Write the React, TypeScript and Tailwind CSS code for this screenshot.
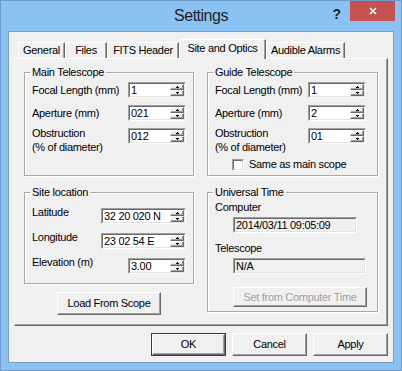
import type { ReactNode } from "react";

// classic 3D edges
const sunken =
  "border border-t-[#a0a0a0] border-l-[#a0a0a0] border-b-white border-r-white";
const sunkenInner =
  "border border-t-[#696969] border-l-[#696969] border-b-[#e3e3e3] border-r-[#e3e3e3]";
const raised =
  "border border-t-white border-l-white border-b-[#696969] border-r-[#696969] shadow-[inset_-1px_-1px_0_#a0a0a0]";

function Arrow({ up }: { up?: boolean }) {
  return (
    <svg width="3" height="2" viewBox="0 0 3 2" shapeRendering="crispEdges">
      {up ? <path d="M1 0h1v1h1v1H0V1h1z" fill="#000" /> : <path d="M0 0h3v1H2v1H1V1H0z" fill="#000" />}
    </svg>
  );
}

function Spin({ value, width }: { value: string; width: string }) {
  return (
    <div className={`${sunken} ${width} h-[16px] bg-white`}>
      <div className={`${sunkenInner} flex h-full`}>
        <div className="flex-1 pl-[1px] leading-[12px] text-black overflow-hidden whitespace-nowrap">{value}</div>
        <div className="flex w-[14px] flex-col">
          <div className={`${raised} flex h-[6px] items-center justify-center bg-[#f0f0f0]`}>
            <Arrow up />
          </div>
          <div className={`${raised} flex h-[6px] items-center justify-center bg-[#f0f0f0]`}>
            <Arrow />
          </div>
        </div>
      </div>
    </div>
  );
}

function Field({ value, width }: { value: string; width: string }) {
  return (
    <div className={`${sunken} ${width} h-[16px] bg-[#f0f0f0]`}>
      <div className={`${sunkenInner} h-full pl-[1px] leading-[12px] text-black`}>{value}</div>
    </div>
  );
}

function Group({ title, children, className = "" }: { title: string; children: ReactNode; className?: string }) {
  return (
    <fieldset
      className={`border border-[#a9a9a9] px-[7px] shadow-[1px_1px_0_white,inset_1px_1px_0_white] ${className}`}
    >
      <legend className="-ml-[2px] bg-[#f0f0f0] px-[2px] leading-[13px]">{title}</legend>
      {children}
    </fieldset>
  );
}

function Tab({ label, width, active }: { label: string; width: string; active?: boolean }) {
  if (active) {
    return (
      <div
        className={`${width} relative z-10 h-[20px] border-l border-r border-t border-l-white border-t-white border-r-[#696969] bg-[#f0f0f0] pt-[1px] text-center leading-[14px] shadow-[inset_-1px_0_0_#a0a0a0]`}
      >
        {label}
      </div>
    );
  }
  return (
    <div
      className={`${width} mb-px h-[16px] border-l border-r border-t border-l-white border-t-white border-r-[#696969] text-center leading-[14px] shadow-[inset_-1px_0_0_#a0a0a0]`}
    >
      {label}
    </div>
  );
}

function Button({ label, width, height, primary, disabled, className = "" }: {
  label: string;
  width: string;
  height: string;
  primary?: boolean;
  disabled?: boolean;
  className?: string;
}) {
  return (
    <div className={`${width} ${height} ${primary ? "border border-[#3c3c3c]" : ""} ${className}`}>
      <div
        className={`${raised} flex h-full items-center justify-center bg-[#f0f0f0] ${disabled ? "text-[#a0a0a0]" : "text-black"}`}
      >
        {label}
      </div>
    </div>
  );
}

export default function App() {
  return (
    <div className="flex h-[371px] w-[402px] flex-col border border-[#6a9bcc] bg-[#8ac2f4] font-['Liberation_Sans',Arial,sans-serif]">
      {/* title bar */}
      <div className="grid h-[30px] grid-cols-[1fr_auto_1fr]">
        <div />
        <div className="pt-[7px] text-[16px] leading-none tracking-[-0.5px] text-[#1f1f1f]">Settings</div>
        <div className="flex items-start justify-end pr-[6px]">
          <span className="mr-[9px] pt-[6px] text-[14px] font-bold leading-none text-[#1e1e1e]">?</span>
          <div className="flex h-[20px] w-[45px] items-center justify-center bg-[#c75050]">
            <svg width="8" height="8" viewBox="0 0 8 8">
              <path d="M1 1L7 7M7 1L1 7" stroke="#fff" strokeWidth="1.6" />
            </svg>
          </div>
        </div>
      </div>

      {/* client area */}
      <div className="mx-[7px] mb-[7px] flex flex-1 flex-col border border-[#7b9ec4] bg-[#f0f0f0] px-[5px] pt-[7px] text-[11px] tracking-[-0.3px] text-black">
        <div className="-mb-px flex h-[20px] items-end pl-[4px]">
          <Tab label="General" width="w-[47px]" />
          <Tab label="Files" width="w-[42px]" />
          <Tab label="FITS Header" width="w-[72px]" />
          <Tab label="Site and Optics" width="w-[87px]" active />
          <Tab label="Audible Alarms" width="w-[79px]" />
        </div>

        <div className="h-[268px] border border-b-[#696969] border-l-white border-r-[#696969] border-t-white pl-[9px] pt-[7px] shadow-[inset_-1px_-1px_0_#a0a0a0]">
          <div className="grid grid-cols-[170px_171px] gap-x-[13px] gap-y-[10px]">
            <Group title="Main Telescope">
              <div className="mt-[3px] flex h-[16px] items-center">
                <span className="w-[96px]">Focal Length (mm)</span>
                <Spin value="1" width="w-[58px]" />
              </div>
              <div className="mt-[7px] flex h-[16px] items-center">
                <span className="w-[96px]">Aperture (mm)</span>
                <Spin value="021" width="w-[58px]" />
              </div>
              <div className="mt-[5px] flex items-start">
                <span className="w-[96px] leading-[14px]">
                  Obstruction
                  <br />
                  (% of diameter)
                </span>
                <div className="mt-[2px]">
                  <Spin value="012" width="w-[58px]" />
                </div>
              </div>
            </Group>

            <Group title="Guide Telescope" className="pb-[4px]">
              <div className="mt-[3px] flex h-[16px] items-center">
                <span className="w-[93px]">Focal Length (mm)</span>
                <Spin value="1" width="w-[58px]" />
              </div>
              <div className="mt-[7px] flex h-[16px] items-center">
                <span className="w-[93px]">Aperture (mm)</span>
                <Spin value="2" width="w-[58px]" />
              </div>
              <div className="mt-[5px] flex items-start">
                <span className="w-[93px] leading-[14px]">
                  Obstruction
                  <br />
                  (% of diameter)
                </span>
                <div className="mt-[2px]">
                  <Spin value="01" width="w-[58px]" />
                </div>
              </div>
              <div className="ml-[17px] mt-[4px] flex h-[13px] items-center">
                <div className={`${sunken} h-[12px] w-[12px] bg-white`}>
                  <div className={`${sunkenInner} h-full`} />
                </div>
                <span className="ml-[5px]">Same as main scope</span>
              </div>
            </Group>

            <div className="flex flex-col">
              <Group title="Site location" className="pb-[9px]">
                <div className="mt-[7px] flex items-start">
                  <span className="w-[69px] leading-[13px]">Latitude</span>
                  <div className="mt-[2px]">
                    <Spin value="32 20 020 N" width="w-[85px]" />
                  </div>
                </div>
                <div className="mt-[7px] flex items-start">
                  <span className="w-[69px] leading-[13px]">Longitude</span>
                  <div className="mt-[2px]">
                    <Spin value="23 02 54 E" width="w-[85px]" />
                  </div>
                </div>
                <div className="mt-[7px] flex items-start">
                  <span className="w-[96px] leading-[13px]">Elevation (m)</span>
                  <div className="mt-[2px]">
                    <Spin value="3.00" width="w-[58px]" />
                  </div>
                </div>
              </Group>
              <Button label="Load From Scope" width="w-[104px]" height="h-[23px]" className="mt-[8px] self-center" />
            </div>

            <Group title="Universal Time" className="self-start pb-[4px]">
              <div className="mt-[2px] leading-[13px]">Computer</div>
              <div className="ml-[18px] mt-[3px]">
                <Field value="2014/03/11 09:05:09" width="w-[124px]" />
              </div>
              <div className="mt-[9px] leading-[13px]">Telescope</div>
              <div className="ml-[18px] mt-[3px]">
                <Field value="N/A" width="w-[133px]" />
              </div>
              <Button
                label="Set from Computer Time"
                width="w-[134px]"
                height="h-[20px]"
                disabled
                className="ml-[18px] mt-[13px]"
              />
            </Group>
          </div>
        </div>

        <div className="mt-[7px] flex justify-end gap-[6px]">
          <Button label="OK" width="w-[75px]" height="h-[23px]" primary />
          <Button label="Cancel" width="w-[75px]" height="h-[23px]" />
          <Button label="Apply" width="w-[75px]" height="h-[23px]" />
        </div>
      </div>
    </div>
  );
}
